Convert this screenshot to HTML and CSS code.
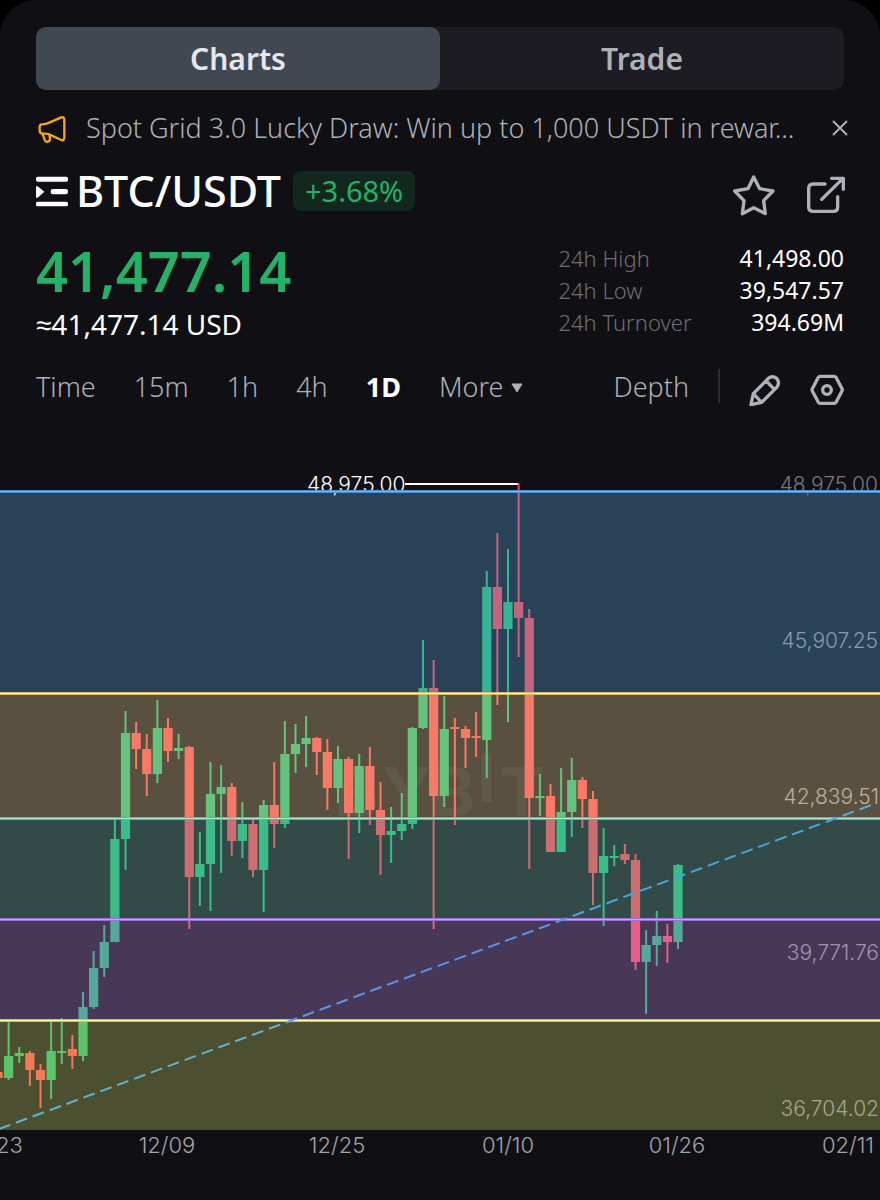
FILE: index.html
```html
<!DOCTYPE html>
<html lang="en">
<head>
  <meta charset="UTF-8" />
  <meta name="viewport" content="width=device-width, initial-scale=1.0"/>
  <title>BTC/USDT</title>
  <link rel="stylesheet" href="styles.css">
</head>
<body>
  <main class="app">
    <nav class="tabs">
      <button class="tab active">Charts</button>
      <button class="tab">Trade</button>
    </nav>

    <div class="notice">
      <svg class="horn" viewBox="0 -8 96 96" width="32" height="32">
        <path d="M18 29Q30 29 40 24L76 8Q85 6 85 16V68Q85 79 76 76L46 62Q38 57 28 57H20Q11 57 11 47V38Q11 29 18 29Z"/>
        <path d="M20 58L26 76Q28 82 35 81Q43 79 42 71L40 60"/>
      </svg>
      <p>Spot Grid 3.0 Lucky Draw: Win up to 1,000 USDT in rewar...</p>
      <button class="close" aria-label="Close">
        <svg viewBox="0 0 16 16" width="16" height="16"><path d="M1 1L15 15M15 1L1 15"/></svg>
      </button>
    </div>

    <header class="pair">
      <svg class="list" viewBox="0 0 96 93" width="32" height="31">
        <rect x="0" y="2" width="96" height="15" rx="5"/>
        <path d="M0 31L5 31L25 47L5 65H0Z"/>
        <rect x="44" y="39" width="52" height="16" rx="7"/>
        <rect x="0" y="77" width="96" height="14" rx="5"/>
      </svg>
      <h1>BTC/USDT</h1>
      <span class="change">+3.68%</span>
      <div class="actions">
        <button aria-label="Favourite">
          <svg viewBox="0 0 126 126" width="42" height="42"><path d="M62 9L80 44L120 51L92 80L97 119L62 101L28 119L33 80L5 51L45 44Z"/></svg>
        </button>
        <button aria-label="Share">
          <svg viewBox="0 0 120 120" width="40" height="40"><path d="M57 27H22Q8 27 8 41V95Q8 109 22 109H82Q95 109 95 95V65M47 73L111 10M77 10H112V43"/></svg>
        </button>
      </div>
    </header>

    <section class="summary">
      <div>
        <div class="price">41,477.14</div>
        <div class="usd">≈41,477.14 USD</div>
      </div>
      <dl class="stats">
        <dt>24h High</dt><dd>41,498.00</dd>
        <dt>24h Low</dt><dd>39,547.57</dd>
        <dt>24h Turnover</dt><dd>394.69M</dd>
      </dl>
    </section>

    <nav class="toolbar">
      <button>Time</button>
      <button>15m</button>
      <button>1h</button>
      <button>4h</button>
      <button class="active">1D</button>
      <button class="more">More <svg viewBox="0 -3 12 13" width="12" height="13"><path d="M1 1H11L6 9Z"/></svg></button>
      <button class="depth">Depth</button>
      <span class="divider"></span>
      <button class="tool" aria-label="Draw">
        <svg viewBox="0 0 96 96" width="32" height="32"><path d="M6 92L13 59L58 13Q70 3 83 13Q94 26 83 40L38 85ZM13 59L38 85M51 20L76 46"/></svg>
      </button>
      <button class="tool" aria-label="Chart settings">
        <svg viewBox="0 0 102 102" width="34" height="34"><path d="M30 10H73Q76 10 78 13L96 47Q98 51 96 54L78 88Q76 91 73 91H30Q27 91 25 88L7 54Q5 51 7 47L25 13Q27 10 30 10Z"/><circle cx="51" cy="51" r="13"/></svg>
      </button>
    </nav>

    <svg class="chart" viewBox="0 430 880 770">
      <defs>
        <!-- candle colours change with the fib zone behind them -->
        <linearGradient id="up" gradientUnits="userSpaceOnUse" x1="0" y1="0" x2="0" y2="1200"></linearGradient>
        <linearGradient id="down" gradientUnits="userSpaceOnUse" x1="0" y1="0" x2="0" y2="1200"></linearGradient>
        <linearGradient id="trend" gradientUnits="userSpaceOnUse" x1="0" y1="0" x2="0" y2="1200"></linearGradient>
      </defs>

      <g id="zones"></g>

      <text class="label high" x="307" y="492">48,975.00</text>
      <path class="leader" d="M405 484H519"/>
      <text class="label axis" x="878" y="492">48,975.00</text>

      <g class="watermark">
        <text x="334" y="816">B</text>
        <text x="382" y="816">Y</text>
        <text x="430" y="816">B</text>
        <text x="477" y="802">I</text>
        <text x="499" y="816">T</text>
      </g>

      <g id="candles"></g>
      <g id="levels"></g>
      <path class="trend" d="M-1 1129L877 803"/>

      <text class="label axis blue" x="878" y="648">45,907.25</text>
      <text class="label axis brown" x="879" y="804">42,839.51</text>
      <text class="label axis purple" x="879" y="960">39,771.76</text>
      <text class="label axis olive" x="879" y="1116">36,704.02</text>

      <text class="date" x="-3" y="1153">11/23</text>
      <text class="date" x="167" y="1153">12/09</text>
      <text class="date" x="337" y="1153">12/25</text>
      <text class="date" x="508" y="1153">01/10</text>
      <text class="date" x="677" y="1153">01/26</text>
      <text class="date" x="848" y="1153">02/11</text>
    </svg>
  </main>

  <script src="chart.js"></script>
</body>
</html>
```

FILE: styles.css
```css
:root {
  --bg: #101014;
  --text: #adb1b8;
  --muted: #6e6f75;
  --green: #24b26b;
}

* {
  box-sizing: border-box;
}

body {
  margin: 0;
  background: #000;
  color: var(--text);
  font-family: "Noto Sans", sans-serif;
}

.app {
  min-height: 100vh;
  background: var(--bg);
  border-radius: 36px 36px 0 0;
  padding-top: 27px;
  overflow: hidden;
}

button {
  padding: 0;
  border: none;
  background: none;
  color: inherit;
  font: inherit;
  cursor: pointer;
}

svg {
  display: block;
  flex: none;
}

.tabs,
.notice,
.pair,
.summary,
.toolbar {
  display: flex;
  margin: 0 36px;
}

.tabs {
  background: #1d1c22;
  border-radius: 10px;
}

.tab {
  flex: 1;
  height: 63px;
  border-radius: 10px;
  font-size: 30px;
  line-height: 40px;
  font-weight: 600;
}

.tab.active {
  background: #414852;
  color: #e3e7ee;
}

.notice {
  height: 38px;
  margin-top: 19px;
  align-items: center;
}

.horn {
  fill: none;
  stroke: #f7a51c;
  stroke-width: 7;
  stroke-linejoin: round;
}

.notice p {
  flex: 1;
  min-width: 0;
  margin: 0 0 0 18px;
  font-size: 27px;
  line-height: 38px;
  font-weight: 300;
  white-space: nowrap;
}

.close {
  padding: 4px;
  margin-right: -8px;
}

.close svg {
  fill: none;
  stroke: var(--text);
  stroke-width: 2;
}

.pair {
  height: 48px;
  margin-top: 20px;
  align-items: center;
  color: #fff;
}

.list {
  fill: #fff;
}

.pair h1 {
  margin: 0 12px 0 8px;
  font-size: 43px;
  line-height: 48px;
  font-weight: 500;
}

.change {
  padding: 0 12px;
  border-radius: 8px;
  background: #12281f;
  color: var(--green);
  font-size: 29px;
  line-height: 40px;
}

.actions {
  display: flex;
  align-items: center;
  gap: 31px;
  margin: 0 -2px 0 auto;
  padding-top: 8px;
}

.actions svg,
.tool svg {
  fill: none;
  stroke: var(--text);
  stroke-width: 10;
  stroke-linecap: round;
  stroke-linejoin: round;
}

.summary {
  justify-content: space-between;
  align-items: flex-start;
  margin-top: 27px;
}

.price {
  color: var(--green);
  font-size: 56px;
  line-height: 56px;
  font-weight: 600;
}

.usd {
  margin-top: 10px;
  color: #fff;
  font-size: 28px;
  line-height: 32px;
}

.stats {
  display: grid;
  grid-template-columns: auto auto;
  column-gap: 48px;
  margin: 0;
  font-size: 23px;
  line-height: 32px;
}

.stats dt {
  color: var(--muted);
  font-size: 22px;
  font-weight: 300;
}

.stats dd {
  margin: 0;
  color: #fff;
  text-align: right;
}

.toolbar {
  height: 44px;
  margin-top: 24px;
  align-items: center;
  gap: 38px;
  font-size: 27px;
  font-weight: 300;
}

.toolbar .active {
  color: #fff;
  font-weight: 700;
}

.more {
  display: flex;
  align-items: center;
  gap: 8px;
}

.more svg {
  fill: var(--text);
  stroke: var(--text);
  stroke-linejoin: round;
}

.depth {
  margin-left: auto;
}

.divider {
  width: 2px;
  height: 34px;
  margin: 0 -9px;
  background: #2c2c32;
}

.tool {
  padding-top: 8px;
}

.tool + .tool {
  margin-left: -9px;
}

.chart {
  width: 100%;
  margin-top: 22px;
  font-family: Inter, sans-serif;
}

.label {
  font-size: 21px;
  font-weight: 300;
}

.high {
  fill: #fff;
}

.axis {
  fill: #77787d;
  text-anchor: end;
}

.axis.blue { fill: #8b9aab; }
.axis.brown { fill: #bcb09a; }
.axis.purple { fill: #a391b3; }
.axis.olive { fill: #a5a688; }

.date {
  fill: #a3a3a8;
  font-size: 22px;
  font-weight: 300;
  text-anchor: middle;
}

.leader {
  stroke: #fff;
  stroke-width: 2;
}

.trend {
  fill: none;
  stroke: url(#trend);
  stroke-width: 2;
  stroke-dasharray: 12 6;
}

.watermark {
  fill: #615a4a;
  font-size: 68px;
  font-weight: 700;
}
```

FILE: chart.js
```js
const NS = "http://www.w3.org/2000/svg";

// y range, background, up candle, down candle, trend line
const zones = [
  [0, 491, null, "#24b26b", "#f0445c", "#48a5da"],
  [491, 693, "#2a4258", "#37b396", "#c4657f", "#48a5da"],
  [693, 818, "#59503f", "#66c37e", "#f87966", "#5aa9d2"],
  [818, 919, "#324b49", "#3cbd87", "#cc6d70", "#48a5da"],
  [919, 1021, "#483858", "#56a998", "#e65f88", "#5b94ea"],
  [1021, 1130, "#4d5030", "#5cc46a", "#f27856", "#60b2ce"],
];

// y, edge colour, core colour
const levels = [
  [491, "#4d8fd0", "#73b7ee"],
  [693, "#d5b96c", "#fff1c4"],
  [818, "#62b39a", "#a5ead3"],
  [919, "#9b6fd6", "#caa3fa"],
  [1020, "#c6c65a", "#fbfb9d"],
];

// high, body top, body bottom, low, up
const candles = [
  [1072, 1072, 1078, 1078, 0], [1021, 1056, 1078, 1080, 1], [1047, 1053, 1056, 1063, 1],
  [1051, 1053, 1070, 1086, 0], [1064, 1070, 1080, 1108, 0], [1022, 1051, 1080, 1099, 1],
  [1018, 1051, 1053, 1064, 1], [1035, 1049, 1056, 1069, 0], [992, 1007, 1056, 1061, 1],
  [951, 968, 1007, 1009, 1], [925, 942, 968, 977, 1], [818, 839, 942, 942, 1],
  [711, 733, 839, 870, 1], [722, 733, 749, 769, 0], [734, 749, 774, 796, 0],
  [700, 728, 774, 783, 1], [718, 728, 751, 762, 0], [734, 748, 751, 759, 1],
  [746, 747, 877, 929, 0], [832, 864, 877, 906, 1], [762, 794, 864, 911, 1],
  [765, 787, 794, 873, 1], [783, 787, 841, 856, 0], [802, 824, 841, 858, 1],
  [818, 824, 870, 877, 0], [800, 805, 870, 912, 1], [762, 805, 824, 848, 0],
  [721, 754, 824, 828, 1], [724, 744, 754, 773, 1], [716, 738, 744, 767, 1],
  [737, 738, 752, 775, 0], [739, 752, 788, 810, 0], [746, 759, 788, 803, 1],
  [757, 759, 813, 859, 0], [754, 766, 813, 833, 1], [747, 766, 810, 825, 0],
  [782, 810, 835, 875, 0], [807, 831, 835, 863, 1], [793, 824, 831, 840, 1],
  [727, 728, 824, 829, 1], [640, 688, 728, 729, 1], [660, 688, 796, 929, 0],
  [696, 729, 796, 807, 1], [718, 727, 729, 825, 0], [726, 729, 738, 768, 0],
  [712, 736, 738, 757, 0], [571, 587, 740, 778, 1], [533, 587, 629, 705, 0],
  [549, 602, 629, 722, 1], [483, 602, 618, 657, 0], [609, 618, 798, 869, 0],
  [774, 796, 798, 816, 1], [784, 796, 852, 852, 0], [768, 812, 852, 852, 1],
  [758, 780, 812, 837, 1], [777, 780, 799, 828, 0], [791, 799, 873, 905, 0],
  [828, 856, 873, 926, 1], [845, 856, 858, 866, 1], [844, 854, 860, 864, 0],
  [854, 860, 962, 970, 0], [930, 945, 962, 1014, 1], [911, 936, 945, 966, 1],
  [924, 936, 942, 963, 0], [864, 865, 942, 949, 1],
];

function add(parent, tag, attrs) {
  const el = document.createElementNS(NS, tag);
  for (const key in attrs) el.setAttribute(key, attrs[key]);
  document.getElementById(parent).appendChild(el);
}

function rect(parent, x, y, width, height, fill) {
  add(parent, "rect", { x, y, width, height, fill });
}

zones.forEach(([top, bottom, bg, up, down, trend]) => {
  if (bg) rect("zones", 0, top, 880, bottom - top, bg);
  [["up", up], ["down", down], ["trend", trend]].forEach(([id, color]) => {
    add(id, "stop", { offset: top / 1200, "stop-color": color });
    add(id, "stop", { offset: bottom / 1200, "stop-color": color });
  });
});

const step = 10.625;
candles.forEach(([high, top, bottom, low, up], i) => {
  const x = -2 + i * step;
  const fill = up ? "url(#up)" : "url(#down)";
  rect("candles", x - 1, high, 2, low - high, fill);
  rect("candles", x - 4.6, top, 9.2, bottom - top, fill);
});

levels.forEach(([y, edge, core]) => {
  rect("levels", 0, y - 1, 880, 3, edge);
  rect("levels", 0, y, 880, 1, core);
});
```
